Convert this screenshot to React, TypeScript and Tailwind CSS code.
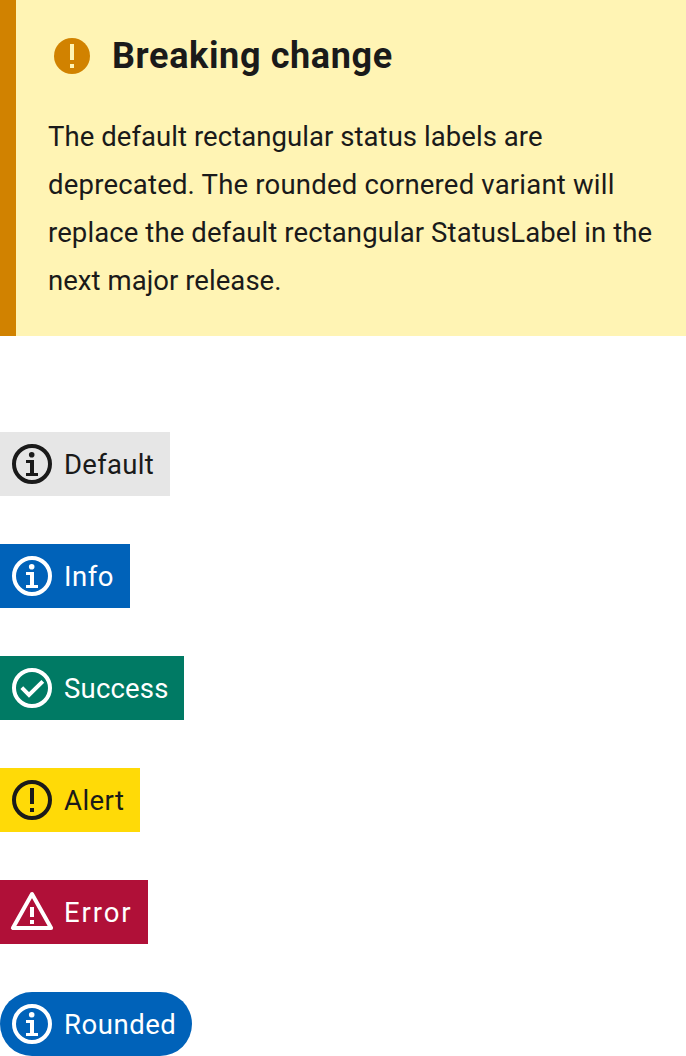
import React from "react";

type IconKind = "info" | "check" | "alert" | "error";

function Icon({ kind }: { kind: IconKind }) {
  return (
    <svg viewBox="0 0 48 48" className="h-12 w-12 shrink-0" fill="none" stroke="currentColor" strokeWidth="4">
      {kind !== "error" && <circle cx="24" cy="24" r="18" />}
      {kind === "info" && (
        <g fill="currentColor" stroke="none">
          <circle cx="23.7" cy="14.7" r="2.8" />
          <path d="M18 20h8v13h4V36H18v-3h4v-10H18z" />
        </g>
      )}
      {kind === "check" && <path d="M13.8 23.7l7.2 7.2L34.8 17.4" />}
      {kind === "alert" && <path d="M22 12h4v16h-4zM22 32h4v4h-4z" fill="currentColor" stroke="none" />}
      {kind === "error" && (
        <>
          <path d="M24 6L4.9 40H43.1z" strokeLinejoin="round" />
          <path d="M22 19h4v10h-4zM22 32h4v4h-4z" fill="currentColor" stroke="none" />
        </>
      )}
    </svg>
  );
}

const labels: { text: string; kind: IconKind; box: string; tracking: string }[] = [
  { text: "Default", kind: "info", box: "w-[170px] bg-[#e6e6e6] text-[#1a1a1a]", tracking: "tracking-[0.3px]" },
  { text: "Info", kind: "info", box: "w-[130px] bg-[#0062b9] text-white", tracking: "tracking-[0.5px]" },
  { text: "Success", kind: "check", box: "w-[184px] bg-[#007a64] text-white", tracking: "tracking-[0.2px]" },
  { text: "Alert", kind: "alert", box: "w-[140px] bg-[#ffda07] text-[#1a1a1a]", tracking: "tracking-[0.45px]" },
  { text: "Error", kind: "error", box: "w-[148px] bg-[#b01038] text-white", tracking: "tracking-[1.9px]" },
  { text: "Rounded", kind: "info", box: "w-[192px] rounded-full bg-[#0062b9] text-white", tracking: "tracking-[0.55px]" },
];

export default function App() {
  return (
    <main className="h-[1056px] w-[686px] overflow-hidden bg-white font-['Roboto',sans-serif] text-[#1a1a1a]">
      <section className="h-[336px] border-l-16 border-[#d18200] bg-[#fff4b4] pt-8 pl-8">
        <h2 className="flex h-12 items-center gap-4 text-[36px] font-bold">
          <svg viewBox="0 0 48 48" className="h-12 w-12 shrink-0">
            <circle cx="24" cy="24" r="18" fill="#d18200" />
            <path d="M22 12h4v16h-4zM22 32h4v4h-4z" fill="#fff4b4" />
          </svg>
          <span className="whitespace-nowrap tracking-[0.63px]">Breaking change</span>
        </h2>
        <p className="mt-[33px] text-[27.5px] leading-12 whitespace-nowrap">
          <span className="block tracking-[0.06px]">The default rectangular status labels are</span>
          <span className="block tracking-[0.2px]">deprecated. The rounded cornered variant will</span>
          <span className="block tracking-[0.1px]">replace the default rectangular StatusLabel in the</span>
          <span className="block tracking-[0.05px]">next major release.</span>
        </p>
      </section>
      <section className="mt-24 flex flex-col items-start gap-12">
        {labels.map((l) => (
          <div key={l.text} className={`flex h-16 items-center gap-2 pl-2 text-[27.5px] whitespace-nowrap ${l.box}`}>
            <Icon kind={l.kind} />
            <span className={`pt-0.5 ${l.tracking}`}>{l.text}</span>
          </div>
        ))}
      </section>
    </main>
  );
}
